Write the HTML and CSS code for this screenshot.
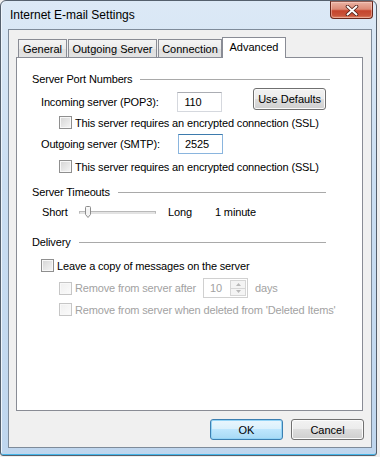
FILE: index.html
```html
<!DOCTYPE html>
<html lang="en">
<head>
    <meta charset="UTF-8">
    <meta name="viewport" content="width=device-width, initial-scale=1.0">
    <title>Internet E-mail Settings</title>
    <link rel="stylesheet" href="styles.css">
</head>
<body>
    <div class="window">
        <div class="titlebar">
            <span class="title">Internet E-mail Settings</span>
            <button class="close-btn" aria-label="Close">
                <svg width="14" height="11" viewBox="0 0 14 11">
                    <path d="M2.5 1.5 L11.5 9.5 M11.5 1.5 L2.5 9.5" stroke="#4a1a12" stroke-width="3.6" stroke-linecap="round"/>
                    <path d="M2.5 1.5 L11.5 9.5 M11.5 1.5 L2.5 9.5" stroke="#ffffff" stroke-width="2" stroke-linecap="round"/>
                </svg>
            </button>
        </div>

        <div class="client">
            <div class="tabs">
                <div class="tab tab-general">General</div>
                <div class="tab tab-outgoing">Outgoing Server</div>
                <div class="tab tab-connection">Connection</div>
                <div class="tab tab-advanced selected">Advanced</div>
            </div>

            <div class="panel">
                <div class="group-title group-ports">
                    <span>Server Port Numbers</span>
                    <div class="group-line"></div>
                </div>

                <div class="port-row first">
                    <span class="port-label">Incoming server (POP3):</span>
                    <div class="text-box">110</div>
                    <button class="btn defaults-btn">Use Defaults</button>
                </div>
                <div class="check-row sub ssl-1">
                    <span class="check"></span>
                    <span>This server requires an encrypted connection (SSL)</span>
                </div>

                <div class="port-row second">
                    <span class="port-label">Outgoing server (SMTP):</span>
                    <div class="text-box focused">2525</div>
                </div>
                <div class="check-row sub ssl-2">
                    <span class="check"></span>
                    <span>This server requires an encrypted connection (SSL)</span>
                </div>

                <div class="group-title group-timeouts">
                    <span>Server Timeouts</span>
                    <div class="group-line"></div>
                </div>

                <div class="slider-row">
                    <span class="slider-short">Short</span>
                    <div class="slider">
                        <div class="slider-track"></div>
                        <svg class="slider-thumb" width="8" height="12" viewBox="0 0 8 12">
                            <path d="M1.5 1.5 Q1.5 0.5 2.5 0.5 L5.5 0.5 Q6.5 0.5 6.5 1.5 L6.5 8.5 L4 11.5 L1.5 8.5 Z" fill="#f3f3f3" stroke="#8c8c8c"/>
                            <path d="M2.5 2 L5.5 2" stroke="#ffffff"/>
                        </svg>
                    </div>
                    <span class="slider-long">Long</span>
                    <span>1 minute</span>
                </div>

                <div class="group-title group-delivery">
                    <span>Delivery</span>
                    <div class="group-line"></div>
                </div>

                <div class="check-row leave-copy">
                    <span class="check"></span>
                    <span>Leave a copy of messages on the server</span>
                </div>
                <div class="check-row sub disabled remove-after">
                    <span class="check"></span>
                    <span class="remove-label">Remove from server after</span>
                    <div class="spinner">
                        <span class="spinner-value">10</span>
                        <div class="spinner-buttons">
                            <span class="spin spin-up">
                                <svg width="5" height="3" viewBox="0 0 5 3"><path d="M0 3 L2.5 0 L5 3 Z" fill="#b8b8b8"/></svg>
                            </span>
                            <span class="spin spin-down">
                                <svg width="5" height="3" viewBox="0 0 5 3"><path d="M0 0 L2.5 3 L5 0 Z" fill="#b8b8b8"/></svg>
                            </span>
                        </div>
                    </div>
                    <span class="days">days</span>
                </div>
                <div class="check-row sub disabled remove-deleted">
                    <span class="check"></span>
                    <span>Remove from server when deleted from 'Deleted Items'</span>
                </div>
            </div>

            <div class="dialog-buttons">
                <button class="btn ok-btn">OK</button>
                <button class="btn">Cancel</button>
            </div>
        </div>
    </div>
</body>
</html>
```

FILE: styles.css
```css
body {
    margin: 0;
    padding: 0;
    background-color: #efefef;
    font-family: "Liberation Sans", Arial, sans-serif;
    font-size: 11px;
    color: #000;
}

.window {
    width: 377px;
    height: 456px;
    box-sizing: border-box;
    border: 1px solid #55606d;
    border-radius: 6px 6px 3px 3px;
    padding: 0 4px 7px 7px;
    display: flex;
    flex-direction: column;
    background: linear-gradient(#dce9f6, #cadef2 40%, #bfd6ee);
    box-shadow: inset 0 -1px 0 #45b6ea, inset 1px 0 0 #eef5fc;
}

/* title bar */
.titlebar {
    height: 28px;
    display: flex;
    justify-content: space-between;
    align-items: flex-start;
}

.title {
    padding-left: 2px;
    line-height: 28px;
    font-size: 12px;
    color: #000;
}

.close-btn {
    width: 43px;
    height: 18px;
    margin-right: -1px;
    padding: 0;
    border: 1px solid #6a271b;
    border-top-color: #8f5a50;
    border-radius: 0 0 4px 4px;
    background: linear-gradient(#eab2a3, #dc8a76 45%, #c5442c 55%, #c9553b 85%, #e08a6a);
    box-shadow: inset 0 0 0 1px rgba(255, 220, 210, 0.45);
    display: flex;
    align-items: center;
    justify-content: center;
}

/* client area */
.client {
    flex: 1;
    border: 1px solid #7e8b9a;
    background-color: #f0f0f0;
    padding: 7px 8px 0 7px;
    display: flex;
    flex-direction: column;
}

.tabs {
    display: flex;
    align-items: flex-end;
    height: 21px;
    padding-left: 2px;
    margin-bottom: -1px;
    position: relative;
    z-index: 1;
}

.tab {
    box-sizing: border-box;
    height: 19px;
    border: 1px solid #898c95;
    background: linear-gradient(#f4f4f4, #ebebeb 50%, #dedede 50%, #e3e3e3);
    text-align: center;
    line-height: 18px;
    font-size: 11px;
}

.tab-general {
    width: 49px;
    margin-right: 1px;
}

.tab-outgoing {
    width: 89px;
    margin-right: 1px;
}

.tab-connection {
    width: 64px;
}

.tab-advanced {
    width: 64px;
}

.tab.selected {
    height: 21px;
    border-bottom: none;
    background: #ffffff;
    line-height: 19px;
}

.panel {
    box-sizing: border-box;
    height: 354px;
    border: 1px solid #898c95;
    background-color: #ffffff;
    padding: 14px 36px 0 15px;
    letter-spacing: -0.15px;
}

/* group headings */
.group-title {
    display: flex;
    align-items: center;
    height: 14px;
    line-height: 14px;
}

.group-line {
    flex: 1;
    height: 1px;
    margin-left: 8px;
    background-color: #a9a9a9;
}

.group-ports {
    margin-right: -4px;
}

.group-timeouts {
    margin-top: 12px;
}

.group-delivery {
    margin-top: 16px;
}

/* port rows */
.port-row {
    display: flex;
    align-items: center;
    height: 20px;
    padding-left: 9px;
}

.port-row.first {
    margin-top: 6px;
}

.port-row.second {
    margin-top: 5px;
}

.port-label {
    width: 137px;
}

.text-box {
    box-sizing: border-box;
    width: 45px;
    height: 20px;
    padding-left: 6px;
    line-height: 18px;
    border: 1px solid #d5d8de;
    border-top-color: #abadb3;
    background-color: #ffffff;
}

.text-box.focused {
    border-color: #8ab5de;
    border-top-color: #3d7bad;
}

.btn {
    box-sizing: border-box;
    width: 73px;
    height: 21px;
    padding: 0;
    border: 1px solid #707070;
    border-radius: 3px;
    background: linear-gradient(#f2f2f2, #ebebeb 50%, #dddddd 50%, #cfcfcf);
    box-shadow: inset 0 0 0 1px #fbfbfb;
    font-family: "Liberation Sans", Arial, sans-serif;
    font-size: 11px;
    color: #000;
}

.defaults-btn {
    height: 22px;
    align-self: flex-start;
    margin-top: -4px;
    margin-left: 31px;
}

/* checkboxes */
.check-row {
    display: flex;
    align-items: center;
    height: 13px;
    white-space: nowrap;
}

.check-row.sub {
    padding-left: 27px;
}

.check {
    box-sizing: border-box;
    width: 13px;
    height: 13px;
    margin-right: 3px;
    flex-shrink: 0;
    border: 1px solid #8f8f8f;
    background: linear-gradient(135deg, #d4d4d4, #f6f6f6);
    box-shadow: inset 0 0 0 1px #f8f8f8;
}

.ssl-1 {
    margin-top: 4px;
}

.ssl-2 {
    margin-top: 6px;
}

.leave-copy {
    margin-top: 10px;
    padding-left: 9px;
}

.disabled {
    color: #a2a2a2;
}

.disabled .check {
    border-color: #c6c6c6;
    background: linear-gradient(135deg, #efefef, #fbfbfb);
}

.remove-after {
    height: 20px;
    margin-top: 6px;
}

.remove-label {
    width: 128px;
}

.remove-deleted {
    margin-top: 5px;
}

/* spinner */
.spinner {
    box-sizing: border-box;
    width: 45px;
    height: 20px;
    display: flex;
    border: 1px solid #d0d0d0;
    background-color: #ffffff;
}

.spinner-value {
    flex: 1;
    padding-left: 6px;
    line-height: 18px;
}

.spinner-buttons {
    width: 16px;
    display: flex;
    flex-direction: column;
    padding: 1px 1px 1px 0;
}

.spin {
    flex: 1;
    display: flex;
    align-items: center;
    justify-content: center;
    border: 1px solid #d6d6d6;
    background-color: #f4f4f4;
}

.spin-down {
    margin-top: -1px;
}

.days {
    margin-left: 7px;
}

/* slider */
.slider-row {
    display: flex;
    align-items: center;
    height: 14px;
    margin-top: 6px;
    padding-left: 10px;
}

.slider-short {
    width: 37px;
}

.slider {
    position: relative;
    width: 77px;
    height: 14px;
    display: flex;
    align-items: center;
}

.slider-track {
    width: 100%;
    height: 3px;
    box-sizing: border-box;
    border: 1px solid #b9b9b9;
    border-bottom-color: #e2e2e2;
    background-color: #e4e4e4;
}

.slider-thumb {
    position: absolute;
    left: 5px;
    top: 1px;
}

.slider-long {
    width: 47px;
    margin-left: 12px;
}

/* dialog buttons */
.dialog-buttons {
    display: flex;
    justify-content: flex-end;
    gap: 8px;
    margin-top: 8px;
    margin-right: -1px;
}

.ok-btn {
    border-color: #3c7fb1;
    background: linear-gradient(#eaf6fd, #d9f0fc 50%, #bee6fd 50%, #a7d9f5);
    box-shadow: inset 0 0 0 1px #94d4f6;
}
```
